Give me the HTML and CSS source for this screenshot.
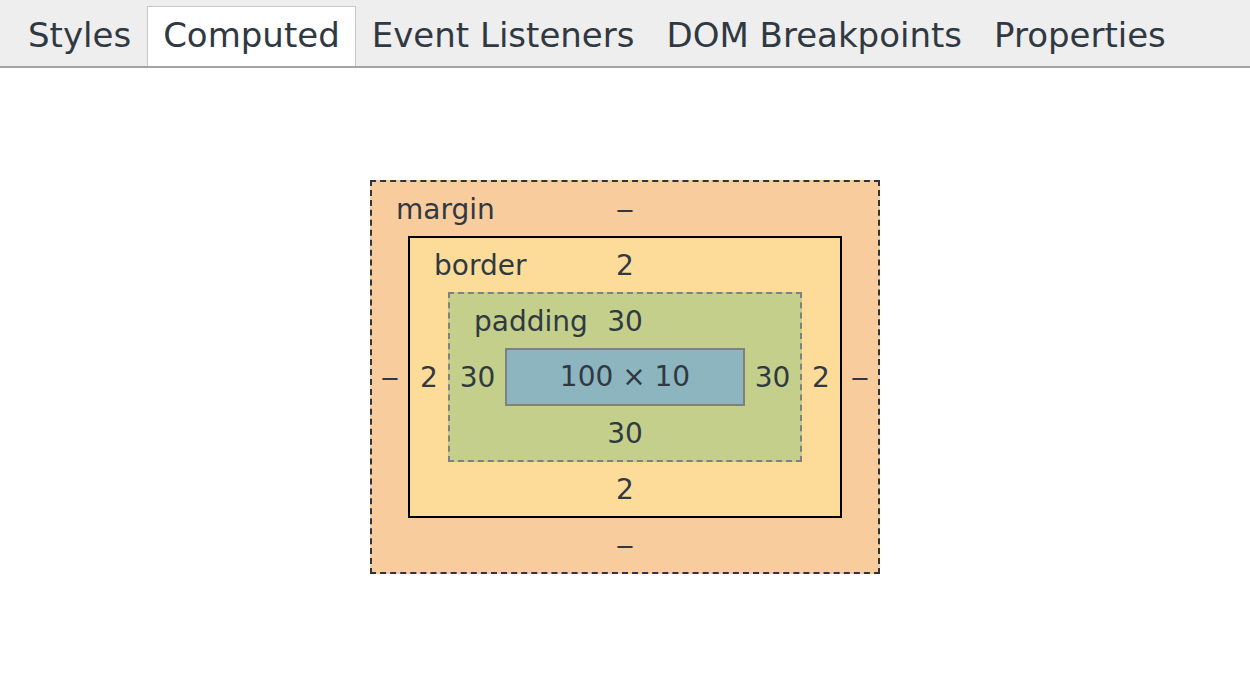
FILE: index.html
```html
<!DOCTYPE html>
<html>
<head>
  <meta charset="UTF-8">
  <title>Computed</title>
  <link rel="stylesheet" href="styles.css">
</head>
<body>

<div class="tabs">
  <div class="tab">Styles</div>
  <div class="tab selected">Computed</div>
  <div class="tab">Event Listeners</div>
  <div class="tab">DOM Breakpoints</div>
  <div class="tab">Properties</div>
</div>

<div class="metrics">

  <!-- margin -->
  <div class="box margin-box">
    <div class="edge"><span class="label">margin</span><span>&#8210;</span><span></span></div>
    <div class="middle">
      <div class="side">&#8210;</div>

      <!-- border -->
      <div class="box border-box">
        <div class="edge"><span class="label">border</span><span>2</span><span></span></div>
        <div class="middle">
          <div class="side">2</div>

          <!-- padding -->
          <div class="box padding-box">
            <div class="edge"><span class="label">padding</span><span>30</span><span></span></div>
            <div class="middle">
              <div class="side">30</div>
              <div class="content-box">100 × 10</div>
              <div class="side">30</div>
            </div>
            <div class="edge"><span></span><span>30</span><span></span></div>
          </div>

          <div class="side">2</div>
        </div>
        <div class="edge"><span></span><span>2</span><span></span></div>
      </div>

      <div class="side">&#8210;</div>
    </div>
    <div class="edge"><span></span><span>&#8210;</span><span></span></div>
  </div>

</div>

</body>
</html>
```

FILE: styles.css
```css
body {
  margin: 0;
  font-family: "DejaVu Sans", Verdana, sans-serif;
  color: #303942;
  background: #fff;
}

.tabs {
  display: flex;
  align-items: flex-end;
  height: 66px;
  padding-left: 12px;
  background: #eeeeee;
  border-bottom: 2px solid #a3a3a3;
}
.tab {
  height: 59px;
  line-height: 57px;
  padding: 0 15px;
  font-size: 34px;
  border: 1px solid transparent;
  border-bottom: none;
  white-space: nowrap;
}
.tab.selected {
  background: #fff;
  border-color: #c8c8c8;
}

.metrics {
  display: flex;
  justify-content: center;
  padding-top: 112px;
  font-size: 28px;
}

.box {
  display: flex;
  flex-direction: column;
}
.edge {
  display: grid;
  grid-template-columns: 1fr auto 1fr;
  align-items: center;
  height: 54px;
  text-align: center;
}
.edge .label {
  text-align: left;
  padding-left: 24px;
}
.middle {
  display: flex;
  align-items: center;
}
.side {
  text-align: center;
}

.margin-box {
  background: #f9cc9d;
  border: 2px dashed #333;
}
.margin-box > .middle > .side {
  width: 36px;
}

.border-box {
  background: #fddc9a;
  border: 2px solid #000;
}
.border-box > .middle > .side {
  width: 38px;
}

.padding-box {
  background: #c3cf8a;
  border: 2px dashed #808080;
}
.padding-box > .middle > .side {
  width: 55px;
}

.content-box {
  width: 236px;
  height: 54px;
  line-height: 54px;
  text-align: center;
  background: #8cb5c0;
  border: 2px solid #808080;
}
```
